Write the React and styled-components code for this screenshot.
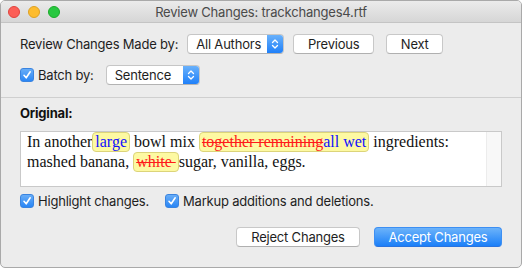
import React from 'react';
import styled, { createGlobalStyle, css } from 'styled-components';

const Global = createGlobalStyle`
  html, body { margin: 0; padding: 0; background: #ffffff; }
  body { font-family: "Inter", "Liberation Sans", sans-serif; letter-spacing: -0.2px; -webkit-font-smoothing: antialiased; }
  * { box-sizing: border-box; }
`;

const Window = styled.div`
  width: 522px;
  height: 268px;
  border: 1px solid #a9a9a9;
  border-radius: 5px;
  background: #ececec;
  overflow: hidden;
  display: flex;
  flex-direction: column;
`;

const TitleBar = styled.div`
  height: 22px;
  flex: none;
  background: linear-gradient(#ebebeb, #d6d6d6);
  border-bottom: 1px solid #c4c4c4;
  display: flex;
  align-items: center;
  position: relative;
  padding-left: 7px;
`;

const Lights = styled.div`
  display: flex;
  gap: 8px;
`;

const Light = styled.span`
  width: 12px;
  height: 12px;
  border-radius: 50%;
  background: ${p => p.$c};
  border: 0.5px solid ${p => p.$b};
`;

const Title = styled.div`
  position: absolute;
  left: 0;
  right: 0;
  text-align: center;
  font-size: 13px;
  color: #4a4a4a;
  pointer-events: none;
`;

const Top = styled.div`
  padding: 11px 19px 0 19px;
  display: flex;
  flex-direction: column;
  gap: 11px;
`;

const Row = styled.div`
  display: flex;
  align-items: center;
  height: 20px;
  font-size: 13px;
  color: #1e1e1e;
`;

const Label = styled.span`
  margin-right: ${p => p.$mr || 0}px;
  white-space: nowrap;
`;

const Popup = styled.div`
  width: ${p => p.$w}px;
  height: 20px;
  display: flex;
  align-items: stretch;
  background: #fff;
  border: 1px solid #c6c6c6;
  border-bottom-color: #b3b3b3;
  border-radius: 4px;
  overflow: hidden;
  margin-right: ${p => p.$mr || 0}px;
  font-size: 13px;
`;

const PopupText = styled.span`
  flex: 1;
  padding-left: 8px;
  display: flex;
  align-items: center;
  color: #1e1e1e;
`;

const PopupArrow = styled.span`
  width: 16px;
  background: linear-gradient(#69b1fb, #1f80f9);
  display: flex;
  align-items: center;
  justify-content: center;
`;

const Button = styled.button`
  height: 20px;
  width: ${p => p.$w}px;
  margin-right: ${p => p.$mr || 0}px;
  font-family: inherit;
  letter-spacing: inherit;
  font-size: 13px;
  border-radius: 4px;
  padding: 0;
  display: flex;
  align-items: center;
  justify-content: center;
  ${p => p.$primary ? css`
    color: #fff;
    background: linear-gradient(#6cb3fa, #1b7ff8);
    border: 1px solid #3d8ff3;
    border-bottom-color: #2a73de;
  ` : css`
    color: #1e1e1e;
    background: #fff;
    border: 1px solid #c8c8c8;
    border-bottom-color: #b0b0b0;
  `}
`;

const Separator = styled.div`
  height: 1px;
  background: #cfcfcf;
  margin-top: 12px;
`;

const Bottom = styled.div`
  padding: 0 19px;
  display: flex;
  flex-direction: column;
`;

const Heading = styled.div`
  font-size: 13px;
  font-weight: 700;
  color: #111;
  height: 16px;
  line-height: 16px;
  margin-top: 7px;
  margin-bottom: 10px;
`;

const TextBox = styled.div`
  height: 56px;
  background: #fff;
  border: 1px solid #c9c9c9;
  display: flex;
`;

const TextArea = styled.div`
  flex: 1;
  padding: 0 0 0 6px;
  font-family: "Liberation Serif", "Times New Roman", serif;
  letter-spacing: 0;
  font-size: 16px;
  line-height: 20px;
  color: #111;
`;

const ScrollTrack = styled.div`
  width: 15px;
  background: #f8f8f8;
  border-left: 1px solid #ececec;
`;

const Mark = styled.span`
  display: inline-block;
  vertical-align: top;
  height: 20px;
  line-height: 18px;
  background: #fdf9a2;
  border: 1px solid #dcd47a;
  border-radius: 4px;
  padding: 0 2px;
`;

const Ins = styled.span`
  color: #1010ff;
`;

const Del = styled.span`
  color: #ff1a1a;
  text-decoration: line-through;
  text-decoration-color: #ff1a1a;
  white-space: pre;
`;

const CheckRow = styled.div`
  display: flex;
  align-items: center;
  height: 14px;
  margin-top: 7px;
  font-size: 13px;
  color: #1e1e1e;
`;

const CheckItem = styled.label`
  display: flex;
  align-items: center;
  gap: 4px;
  margin-right: ${p => p.$mr || 0}px;
  white-space: nowrap;
`;

const Box = styled.span`
  width: 14px;
  height: 14px;
  border-radius: 3px;
  background: linear-gradient(#68adf7, #2a86f5);
  border: 1px solid #3a84e0;
  display: flex;
  align-items: center;
  justify-content: center;
  flex: none;
`;

const Actions = styled.div`
  display: flex;
  justify-content: flex-end;
  gap: 14px;
  margin-top: 19px;
`;

const Chevrons = () => (
  <svg width="8" height="12" viewBox="0 0 8 12">
    <path d="M1.5 4.5 L4 2 L6.5 4.5 M1.5 7.5 L4 10 L6.5 7.5" fill="none" stroke="#fff" strokeWidth="1.3" strokeLinecap="round" strokeLinejoin="round" />
  </svg>
);

const Check = () => (
  <svg width="10" height="10" viewBox="0 0 10 10">
    <path d="M2 5.3 L4.2 7.8 L8.2 1.8" fill="none" stroke="#fff" strokeWidth="1.6" strokeLinecap="round" strokeLinejoin="round" />
  </svg>
);

const Checkbox = ({ label, mr }) => (
  <CheckItem $mr={mr}>
    <Box><Check /></Box>
    <span>{label}</span>
  </CheckItem>
);

export default function App() {
  return (
    <>
      <Global />
      <Window>
        <TitleBar>
          <Lights>
            <Light $c="#fc5f57" $b="#e0443e" />
            <Light $c="#fdbc2e" $b="#dea123" />
            <Light $c="#28c840" $b="#1aab29" />
          </Lights>
          <Title>Review Changes: trackchanges4.rtf</Title>
        </TitleBar>
        <Top>
          <Row>
            <Label $mr={9}>Review Changes Made by:</Label>
            <Popup $w={97} $mr={9}>
              <PopupText>All Authors</PopupText>
              <PopupArrow><Chevrons /></PopupArrow>
            </Popup>
            <Button $w={81} $mr={12}>Previous</Button>
            <Button $w={57}>Next</Button>
          </Row>
          <Row>
            <CheckItem $mr={12}>
              <Box><Check /></Box>
              <span>Batch by:</span>
            </CheckItem>
            <Popup $w={94}>
              <PopupText>Sentence</PopupText>
              <PopupArrow><Chevrons /></PopupArrow>
            </Popup>
          </Row>
        </Top>
        <Separator />
        <Bottom>
          <Heading>Original:</Heading>
          <TextBox>
            <TextArea>
              In another<Mark><Ins>large</Ins></Mark> bowl mix <Mark><Del>together remaining</Del><Ins>all wet</Ins></Mark> ingredients: mashed banana, <Mark><Del>white </Del></Mark>sugar, vanilla, eggs.
            </TextArea>
            <ScrollTrack />
          </TextBox>
          <CheckRow>
            <Checkbox label="Highlight changes." mr={16} />
            <Checkbox label="Markup additions and deletions." />
          </CheckRow>
          <Actions>
            <Button $w={124}>Reject Changes</Button>
            <Button $w={128} $primary>Accept Changes</Button>
          </Actions>
        </Bottom>
      </Window>
    </>
  );
}
